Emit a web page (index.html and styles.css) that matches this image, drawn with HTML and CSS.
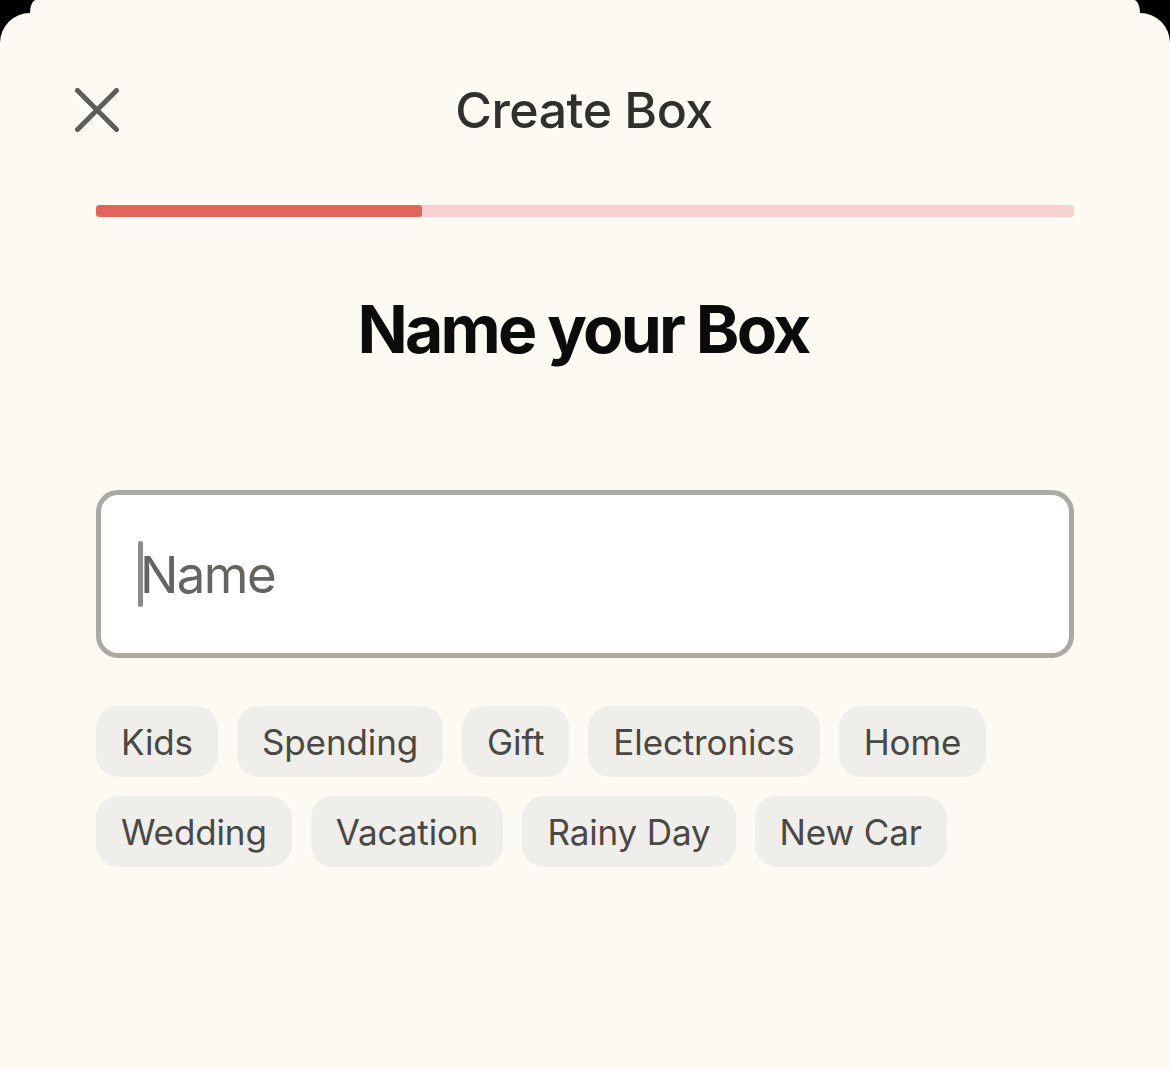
FILE: index.html
```html
<!DOCTYPE html>
<html lang="en">
<head>
<meta charset="utf-8">
<title>Create Box</title>
<link rel="stylesheet" href="styles.css">
</head>
<body>
<div class="back-card"></div>
<main class="sheet">
  <header class="header">
    <button class="close" aria-label="Close">
      <svg width="44" height="44" viewBox="0 0 44 44" aria-hidden="true">
        <path d="M2.5 2.5 L41.5 41.5 M41.5 2.5 L2.5 41.5" stroke="#5f5d59" stroke-width="5" stroke-linecap="round" fill="none"/>
      </svg>
    </button>
    <h1 class="title">Create Box</h1>
    <span class="spacer"></span>
  </header>
  <div class="content">
    <div class="progress"><div class="progress-fill" style="width:33.33%"></div></div>
    <h2 class="heading">Name your Box</h2>
    <div class="field">
      <span class="caret"></span><span class="placeholder">Name</span>
    </div>
    <div class="chips">
      <span class="chip">Kids</span>
      <span class="chip">Spending</span>
      <span class="chip">Gift</span>
      <span class="chip">Electronics</span>
      <span class="chip">Home</span>
      <span class="chip">Wedding</span>
      <span class="chip">Vacation</span>
      <span class="chip">Rainy Day</span>
      <span class="chip">New Car</span>
    </div>
  </div>
</main>
</body>
</html>
```

FILE: styles.css
```css
* { box-sizing: border-box; }
html, body { margin: 0; padding: 0; }
body {
  background: #000;
  width: 1170px;
  height: 1069px;
  overflow: hidden;
  font-family: Inter, "Liberation Sans", sans-serif;
}
.back-card {
  height: 13px;
  margin: 0 30px;
  background: #fcf9f3;
  border-top-left-radius: 6px 13px;
  border-top-right-radius: 6px 13px;
}
.sheet {
  background: #fdfaf3;
  height: 1056px;
  border-radius: 30px 30px 0 0;
  padding-top: 67px;
}
.header {
  display: grid;
  grid-template-columns: 1fr auto 1fr;
  align-items: center;
  height: 60px;
  padding: 0 75px;
}
.close {
  justify-self: start;
  background: none;
  border: 0;
  padding: 0;
  width: 44px;
  height: 44px;
  display: flex;
}
.title {
  margin: 0 0 0 -2px;
  font-size: 50px;
  font-weight: 500;
  color: #32302d;
  letter-spacing: -0.5px;
  line-height: 60px;
}
.content {
  padding: 0 96px;
}
.progress {
  margin-top: 65px;
  height: 12px;
  background: #f5d1cf;
  border-radius: 3px;
  overflow: hidden;
}
.progress-fill {
  height: 100%;
  background: #e0655f;
  border-radius: 3px;
}
.heading {
  margin: 72px 0 0 -4px;
  text-align: center;
  font-size: 66px;
  font-weight: 700;
  line-height: 80px;
  letter-spacing: -2.8px;
  color: #0b0b0b;
}
.field {
  margin-top: 121px;
  height: 168px;
  background: #fff;
  border: 5px solid #aba9a3;
  border-radius: 22px;
  display: flex;
  align-items: center;
  padding-left: 37px;
}
.caret {
  width: 5px;
  height: 66px;
  background: #8c8a86;
  border-radius: 3px;
  margin-right: -3px;
}
.placeholder {
  font-size: 51px;
  color: #666461;
  letter-spacing: -1.6px;
}
.chips {
  margin-top: 48px;
  display: flex;
  flex-wrap: wrap;
  gap: 19px;
}
.chip {
  height: 71px;
  display: inline-flex;
  align-items: center;
  padding: 0 25px;
  background: #efeeea;
  border-radius: 22px;
  font-size: 35px;
  letter-spacing: -0.12px;
  color: #4a4845;
}
```
